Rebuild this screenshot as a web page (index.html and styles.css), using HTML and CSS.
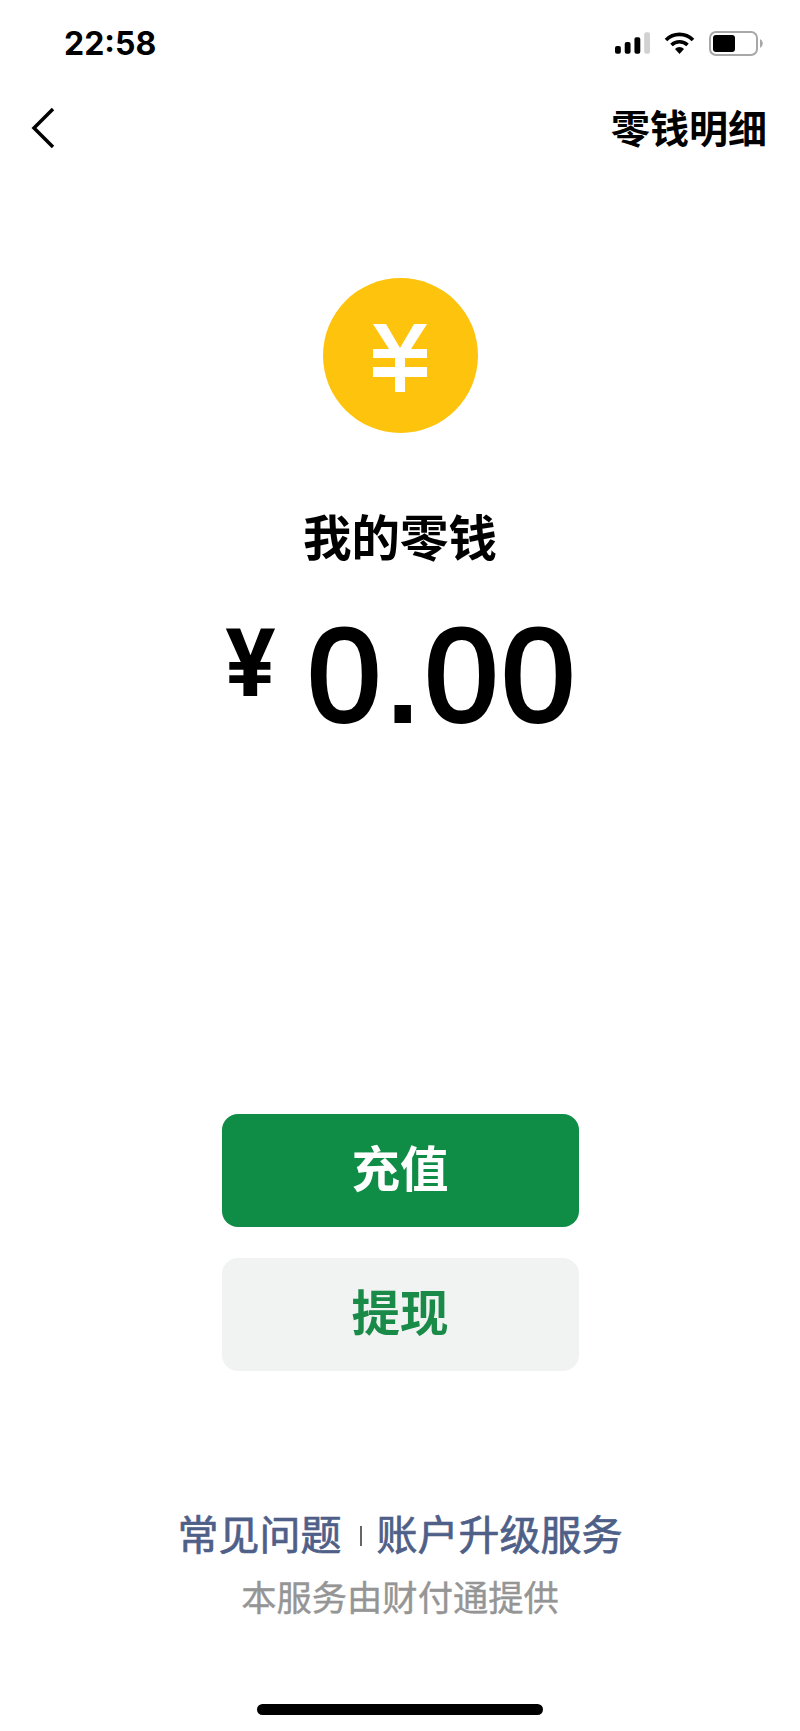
FILE: index.html
```html
<!DOCTYPE html>
<html lang="zh-CN">

<head>
    <meta charset="UTF-8">
    <meta name="viewport" content="width=device-width, initial-scale=1.0">
    <title>我的零钱</title>
    <link rel="stylesheet" href="styles.css">
</head>

<body>
    <div class="page">
        <div class="status">
            <span class="time">22:58</span>
            <div class="status-icons">
                <svg class="signal" width="35" height="22" viewBox="0 0 36 22">
                    <rect x="0" y="14" width="6" height="8" rx="2" fill="#000" />
                    <rect x="10" y="10" width="6" height="12" rx="2" fill="#000" />
                    <rect x="20" y="5" width="6" height="17" rx="2" fill="#000" />
                    <rect x="30" y="0" width="6" height="22" rx="2" fill="#d2d2d2" />
                </svg>
                <svg class="wifi" width="31" height="22" viewBox="0 0 31 22">
                    <path d="M2 8 A19 19 0 0 1 29 8" fill="none" stroke="#000" stroke-width="3.6" />
                    <path d="M7.5 13 A11.5 11.5 0 0 1 23.5 13" fill="none" stroke="#000" stroke-width="3.6" />
                    <path d="M11 17 A6 6 0 0 1 20 17 L15.5 22 Z" fill="#000" />
                </svg>
                <svg class="battery" width="54" height="25" viewBox="0 0 54 25">
                    <rect x="1" y="1" width="47" height="23" rx="6" fill="none" stroke="#a8a8a8" stroke-width="2" />
                    <rect x="4" y="4" width="22" height="17" rx="3" fill="#000" />
                    <path d="M51 8 A5 5 0 0 1 51 17 Z" fill="#a8a8a8" />
                </svg>
            </div>
        </div>

        <div class="nav">
            <svg class="back" width="24" height="42" viewBox="0 0 24 42">
                <path d="M22 2 L3 21 L22 40" fill="none" stroke="#000" stroke-width="3.5" />
            </svg>
            <span class="nav-link">零钱明细</span>
        </div>

        <div class="coin">
            <svg width="56" height="68" viewBox="0 0 56 68">
                <path d="M1 0 H14 L28 24 L42 0 H55 L39 25 H55 V34 H33 V43 H55 V53 H33 V68 H23 V53 H1 V43 H23 V34 H1 V25 H17 Z" fill="#fff" />
            </svg>
        </div>

        <div class="label">我的零钱</div>

        <div class="amount">
            <span class="currency">¥</span>
            <span class="value">0.00</span>
        </div>

        <div class="actions">
            <button class="btn btn-primary">充值</button>
            <button class="btn btn-secondary">提现</button>
        </div>

        <div class="links">
            <span class="link-first">常见问题</span>
            <i class="divider"></i>
            <span>账户升级服务</span>
        </div>
        <div class="provider">本服务由财付通提供</div>

        <div class="home-bar"></div>
    </div>
</body>

</html>
```

FILE: styles.css
```css
* {
    margin: 0;
    padding: 0;
    box-sizing: border-box;
}

body {
    background-color: #fff;
    font-family: "Liberation Sans", "Noto Sans CJK SC", sans-serif;
    color: #000;
}

.page {
    width: 800px;
    height: 1731px;
    display: flex;
    flex-direction: column;
    align-items: center;
    overflow: hidden;
}

.status {
    width: 100%;
    height: 86px;
    padding: 0 37px 0 64px;
    display: flex;
    align-items: center;
    justify-content: space-between;
}

.time {
    font-family: Inter, sans-serif;
    font-size: 32px;
    font-weight: 700;
}

.status-icons {
    display: flex;
    align-items: center;
    gap: 14px;
}

.nav {
    width: 100%;
    height: 84px;
    padding: 0 33px 0 31px;
    display: flex;
    align-items: center;
    justify-content: space-between;
}

.nav-link {
    margin-bottom: 5px;
    font-size: 39px;
    font-weight: 700;
}

.coin {
    width: 155px;
    height: 155px;
    margin-top: 108px;
    padding-top: 5px;
    border-radius: 50%;
    background-color: #fec30d;
    display: flex;
    align-items: center;
    justify-content: center;
}

.label {
    margin-top: 76px;
    font-size: 48.5px;
    line-height: 60px;
    font-weight: 700;
}

.amount {
    height: 120px;
    margin-top: 45px;
    padding-left: 4px;
    display: flex;
    align-items: flex-start;
    gap: 32px;
}

.currency {
    font-family: Roboto, sans-serif;
    font-size: 94px;
    line-height: 100px;
    font-weight: 700;
}

.value {
    margin-top: 2px;
    font-family: "Liberation Sans", sans-serif;
    font-size: 131px;
    line-height: 120px;
    font-weight: 400;
    letter-spacing: 4px;
    -webkit-text-stroke: 4px #000;
}

.actions {
    margin-top: 380px;
    display: flex;
    flex-direction: column;
    gap: 31px;
}

.btn {
    width: 357px;
    height: 113px;
    padding-bottom: 10px;
    border: none;
    border-radius: 16px;
    font-family: inherit;
    font-size: 48.5px;
    font-weight: 700;
}

.btn-primary {
    background-color: #0f8c45;
    color: #fff;
}

.btn-secondary {
    background-color: #f1f2f2;
    color: #198a48;
}

.links {
    margin-top: 140px;
    display: flex;
    align-items: center;
    gap: 15px;
    font-size: 41px;
    line-height: 50px;
    color: #4f6088;
    -webkit-text-stroke: 0.7px #4f6088;
}

.link-first {
    margin-right: 3px;
}

.divider {
    width: 2px;
    height: 20px;
    background-color: #666;
}

.provider {
    margin-top: 16px;
    font-size: 35.3px;
    line-height: 44px;
    color: #959595;
    -webkit-text-stroke: 0.4px #959595;
}

.home-bar {
    width: 286px;
    height: 11px;
    margin-top: 83px;
    border-radius: 6px;
    background-color: #000;
}
```
